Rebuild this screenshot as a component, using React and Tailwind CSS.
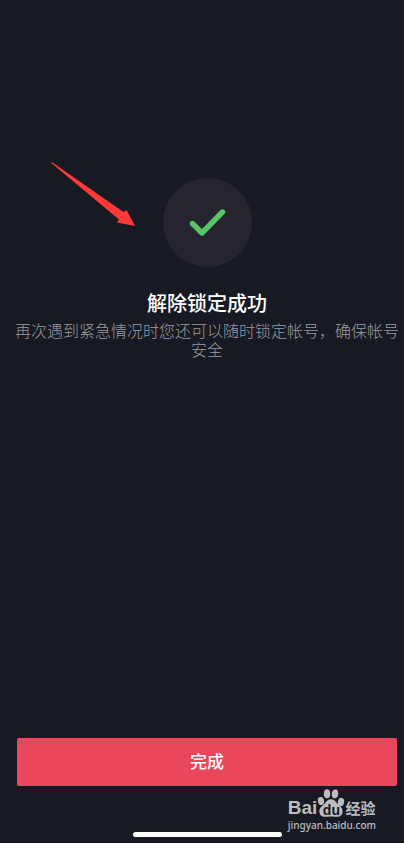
function CheckBadge() {
  return (
    <div className="flex size-[89px] items-center justify-center rounded-full bg-[#26252f]">
      <svg width="38" height="30" viewBox="0 0 38 30" fill="none" aria-hidden="true">
        <path
          d="M4.500 15.500 14 25 34.500 4"
          stroke="#57c468"
          strokeWidth="5.4"
          strokeLinecap="round"
          strokeLinejoin="round"
        />
      </svg>
    </div>
  );
}

function PointerArrow() {
  return (
    <svg
      className="absolute top-[162px] left-[51px]"
      width="85"
      height="65"
      viewBox="0 0 85 65"
      aria-hidden="true"
    >
      <path d="M0 .8.8 0 72.500 50 75.500 48 84 64 66 60.500 68 57.500z" fill="#ff3838" />
    </svg>
  );
}

function Watermark() {
  return (
    <div className="absolute right-7 bottom-[9px] text-[#bcbdc0]">
      <div className="flex h-7 items-end">
        <span className="font-['Liberation_Sans',sans-serif] text-[19px] leading-[18px] font-bold">
          Bai
        </span>
        <span className="relative h-7 w-7">
          <svg width="28" height="28" viewBox="0 0 28 28" fill="currentColor" aria-hidden="true">
            <ellipse cx="4" cy="12" rx="3.1" ry="4" transform="rotate(-12 4 12)" />
            <ellipse cx="10" cy="4.700" rx="3.2" ry="4.5" />
            <ellipse cx="18" cy="4.900" rx="3.2" ry="4.5" transform="rotate(8 18 4.9)" />
            <ellipse cx="24" cy="13" rx="3.1" ry="4.2" transform="rotate(12 24 13)" />
            <path d="M14 10.300c3 0 4.500 2 6 4 1.900 2.200 5.600 3.800 5.600 8 0 3.700-2.400 5.500-5.600 5.500-2.200 0-3.800-.4-6-.4s-3.800.4-6 .4c-3.200 0-5.600-1.800-5.600-5.500 0-4.200 3.700-5.800 5.600-8 1.500-2 3-4 6-4z" />
          </svg>
          <span className="absolute inset-x-0 bottom-0 text-center font-['Liberation_Sans',sans-serif] text-[14px] leading-[14px] font-bold text-[#171921]">
            du
          </span>
        </span>
        <span className="font-['Noto_Sans_CJK_SC',sans-serif] text-[15px] leading-[18px] font-bold">
          经验
        </span>
      </div>
      <div className="font-['Noto_Sans',sans-serif] text-[10px] leading-4 font-medium">
        jingyan.baidu.com
      </div>
    </div>
  );
}

export default function App() {
  return (
    <div className="relative flex min-h-screen flex-col border-b border-[#120a1c] bg-[#171a22] pr-[7px] pl-[17px] font-['Noto_Sans_CJK_SC',sans-serif]">
      <main className="flex flex-1 flex-col items-center pt-[178px] text-center">
        <CheckBadge />
        <h1 className="mt-[22px] text-[20px] leading-7 font-medium text-white">解除锁定成功</h1>
        <p className="mt-1 -mx-1 text-[16px] leading-[19px] font-light text-[#9a9ba1]">
          再次遇到紧急情况时您还可以随时锁定帐号，确保帐号安全
        </p>
      </main>

      <footer className="flex flex-col items-center">
        <button
          type="button"
          className="h-12 w-full rounded-xs bg-[#eb475c] pb-0.5 text-[17px] font-medium text-white"
        >
          完成
        </button>
        <div className="mt-[46px] mb-[5px] h-[5px] w-[149px] rounded-full bg-white" />
      </footer>

      <PointerArrow />
      <Watermark />
    </div>
  );
}
